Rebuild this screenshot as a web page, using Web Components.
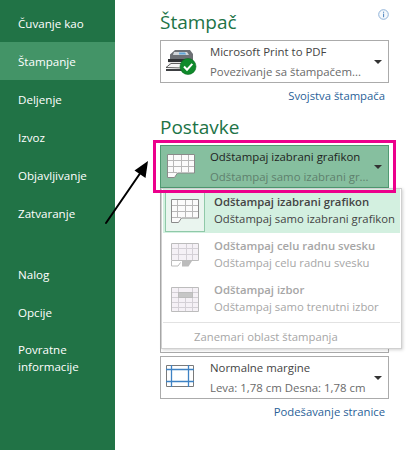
<!DOCTYPE html>
<html lang="sr">
<head>
<meta charset="utf-8">
<title>Štampanje</title>
<style>
  html, body { margin: 0; height: 100%; background: #fff; overflow: hidden; }
  body { font-family: "Open Sans", "Noto Sans", sans-serif; }
</style>
</head>
<body>
<print-page>
  <nav-item slot="nav">Čuvanje kao</nav-item>
  <nav-item slot="nav" selected>Štampanje</nav-item>
  <nav-item slot="nav">Deljenje</nav-item>
  <nav-item slot="nav">Izvoz</nav-item>
  <nav-item slot="nav">Objavljivanje</nav-item>
  <nav-item slot="nav">Zatvaranje</nav-item>
  <nav-item slot="nav" class="first-lower">Nalog</nav-item>
  <nav-item slot="nav">Opcije</nav-item>
  <nav-item slot="nav" class="tall">Povratne<br>informacije</nav-item>

  <section-title>Štampač</section-title>
  <combo-box>
    <printer-icon slot="icon"></printer-icon>
    Microsoft Print to PDF
    <span slot="sub">Povezivanje sa štampačem...</span>
  </combo-box>
  <link-row>Svojstva štampača</link-row>

  <section-title class="second">Postavke</section-title>
  <settings-stack>
    <combo-box active>
      <grid-icon slot="icon" kind="chart"></grid-icon>
      Odštampaj izabrani grafikon
      <span slot="sub">Odštampaj samo izabrani gr...</span>
    </combo-box>
    <option-menu slot="menu">
      <menu-option current>
        <grid-icon slot="icon" kind="chart"></grid-icon>
        Odštampaj izabrani grafikon
        <span slot="sub">Odštampaj samo izabrani grafikon</span>
      </menu-option>
      <menu-option disabled>
        <grid-icon slot="icon" kind="book"></grid-icon>
        Odštampaj celu radnu svesku
        <span slot="sub">Odštampaj celu radnu svesku</span>
      </menu-option>
      <menu-option disabled>
        <grid-icon slot="icon" kind="selection"></grid-icon>
        Odštampaj izbor
        <span slot="sub">Odštampaj samo trenutni izbor</span>
      </menu-option>
      <span slot="footer">Zanemari oblast štampanja</span>
    </option-menu>
  </settings-stack>
  <combo-box>
    <grid-icon slot="icon" kind="margins"></grid-icon>
    Normalne margine
    <span slot="sub">Leva: 1,78 cm Desna: 1,78 cm</span>
  </combo-box>
  <link-row>Podešavanje stranice</link-row>
</print-page>

<script>
class PrintPage extends HTMLElement {
  connectedCallback() {
    this.attachShadow({ mode: 'open' });
    this.shadowRoot.innerHTML = `
      <style>
        :host { display: flex; width: 408px; height: 450px; position: relative; overflow: hidden; background: #fff; }
        .side { width: 115px; flex: none; background: #217346; padding-top: 4px; box-sizing: border-box; display: flex; flex-direction: column; }
        .main { flex: none; width: 229px; margin-left: 45px; padding-top: 9px; display: flex; flex-direction: column; }
        .info { position: absolute; left: 378px; top: 9px; }
        .arrow { position: absolute; left: 100px; top: 155px; z-index: 5; }
      </style>
      <div class="side"><slot name="nav"></slot></div>
      <div class="main"><slot></slot></div>
      <svg class="info" width="11" height="11" viewBox="0 0 11 11">
        <circle cx="5.5" cy="5.5" r="4.8" fill="#f4f8fc" stroke="#8fb2d8"/>
        <rect x="5" y="4.6" width="1.1" height="3.6" fill="#5b8ec4"/>
        <rect x="5" y="2.7" width="1.1" height="1.1" fill="#5b8ec4"/>
      </svg>
      <svg class="arrow" width="54" height="74" viewBox="0 0 54 74">
        <path d="M6 68 L41 17" stroke="#000" stroke-width="2" stroke-linecap="round"/>
        <path d="M48 6 L45.5 23 L34.5 15.5 Z" fill="#000"/>
      </svg>
    `;
  }
}

class NavItem extends HTMLElement {
  connectedCallback() {
    this.attachShadow({ mode: 'open' });
    this.shadowRoot.innerHTML = `
      <style>
        :host { display: flex; align-items: center; min-height: 38px; padding-left: 18px; color: #fff; font-size: 11.6px; line-height: 17px; }
        :host([selected]) { background: #439467; }
        :host(.first-lower) { margin-top: 23px; }
        :host(.tall) { min-height: 54px; }
      </style>
      <div><slot></slot></div>
    `;
  }
}

class SectionTitle extends HTMLElement {
  connectedCallback() {
    this.attachShadow({ mode: 'open' });
    this.shadowRoot.innerHTML = `
      <style>
        :host { display: block; color: #217346; font-size: 19px; line-height: 26px; height: 31px; }
        :host(.second) { margin-top: 10px; }
      </style>
      <slot></slot>
    `;
  }
}

class ComboBox extends HTMLElement {
  connectedCallback() {
    this.attachShadow({ mode: 'open' });
    this.shadowRoot.innerHTML = `
      <style>
        :host { display: flex; align-items: center; height: 43px; box-sizing: border-box; border: 1px solid #ababab; background: #fff; color: #444; position: relative; font-size: 11.4px; }
        :host([active]) { background: #86bf9f; border-color: #4f9a72; color: #1e1e1e; }
        .icon { width: 49px; flex: none; display: flex; padding-left: 5px; box-sizing: border-box; }
        :host([active]) .icon { padding-left: 6px; }
        .text { flex: 1; min-width: 0; white-space: nowrap; line-height: 17px; }
        .sub { color: #6a6a6a; margin-top: 3px; }
        :host([active]) .sub { color: #5f7f6d; }
        .caret { width: 0; height: 0; border: 4px solid transparent; border-top: 4px solid #333; border-bottom: 0; margin-right: 6px; }
        .mark { display: none; position: absolute; left: -8px; right: -8px; top: -6px; bottom: -6px; border: 3px solid #ec008c; box-sizing: border-box; z-index: 4; pointer-events: none; }
        :host([active]) .mark { display: block; }
      </style>
      <div class="icon"><slot name="icon"></slot></div>
      <div class="text"><div><slot></slot></div><div class="sub"><slot name="sub"></slot></div></div>
      <div class="caret"></div>
      <div class="mark"></div>
    `;
  }
}

class LinkRow extends HTMLElement {
  connectedCallback() {
    this.attachShadow({ mode: 'open' });
    this.shadowRoot.innerHTML = `
      <style>
        :host { display: block; text-align: right; color: #2a5f98; font-size: 11.3px; line-height: 17px; padding: 4px 4px 0 0; }
      </style>
      <slot></slot>
    `;
  }
}

// the menu hangs over the combos it covers, only the bottom edge of those peeks out
class SettingsStack extends HTMLElement {
  connectedCallback() {
    this.attachShadow({ mode: 'open' });
    this.shadowRoot.innerHTML = `
      <style>
        :host { display: block; position: relative; height: 211px; z-index: 3; }
        .peek { position: absolute; left: 0; right: 0; top: 43px; height: 165px; box-sizing: border-box; border: 1px solid #ababab; border-top: 0; }
      </style>
      <div class="peek"></div>
      <slot></slot>
      <slot name="menu"></slot>
    `;
  }
}

class OptionMenu extends HTMLElement {
  connectedCallback() {
    this.attachShadow({ mode: 'open' });
    this.shadowRoot.innerHTML = `
      <style>
        :host { display: block; position: absolute; left: 1px; top: 43px; width: 241px; height: 161px; box-sizing: border-box; background: #fff; border: 1px solid #d0d0d0; box-shadow: 1px 1px 3px rgba(0,0,0,.18); padding: 0 1px; }
        .foot { border-top: 1px solid #e2e2e2; margin-top: 1px; height: 27px; line-height: 27px; padding-left: 31px; color: #a6a6a6; font-size: 11.3px; white-space: nowrap; }
      </style>
      <slot></slot>
      <div class="foot"><slot name="footer"></slot></div>
    `;
  }
}

class MenuOption extends HTMLElement {
  connectedCallback() {
    this.attachShadow({ mode: 'open' });
    this.shadowRoot.innerHTML = `
      <style>
        :host { display: flex; align-items: center; height: 44px; box-sizing: border-box; color: #444; font-size: 11.3px; padding: 1px 0; }
        :host([current]) { background: #d3f0e0; }
        :host([disabled]) { color: #a6a6a6; }
        .icon { flex: none; width: 40px; height: 42px; margin-left: 2px; margin-right: 9px; box-sizing: border-box; display: flex; align-items: center; justify-content: center; border: 1px solid transparent; }
        :host([current]) .icon { border-color: #8fc9a8; background: #eaf5ef; }
        .text { white-space: nowrap; line-height: 17px; min-width: 0; margin-top: -3px; }
        .title { font-weight: 600; }
        .sub { font-weight: 400; }
      </style>
      <div class="icon"><slot name="icon"></slot></div>
      <div class="text"><div class="title"><slot></slot></div><div class="sub"><slot name="sub"></slot></div></div>
    `;
  }
}

class GridIcon extends HTMLElement {
  connectedCallback() {
    const kind = this.getAttribute('kind');
    const art = {
      chart: `
        <path d="M.5.5h27v18.5h-17l-3 4.5h-7z" fill="#fbfbfb" stroke="#8a8a8a"/>
        <path d="M1 6.5h26M1 12.5h26M1 18.5h9M6.5 1v17.5M14.5 1v17.5M21.5 1v17.5" stroke="#b8b8b8"/>`,
      book: `
        <path d="M.5.5h27v17H.5z" fill="#f5f1f6" stroke="#bcbcbc"/>
        <path d="M1 5.5h26M1 11.5h26M7.5 1v16M15.5 1v16M21.5 1v16" stroke="#d4d0d6"/>
        <path d="M.5 18v5h6.5l2.5-3.5" fill="none" stroke="#bcbcbc"/>
        <path d="M11 18h10l-3.5 5.5h-6.5z" fill="#bcbcbc"/>`,
      selection: `
        <path d="M.5.5h27v24H.5z" fill="#f5f1f6" stroke="#bcbcbc"/>
        <path d="M1 5.5h26M1 10.5h26M1 15.5h26M1 20.5h26M7.5 1v23M14.5 10.5v13.5M21.5 1v23" stroke="#d4d0d6"/>
        <rect x="7.5" y="5.5" width="14" height="5" fill="#c6c6c6" stroke="#bcbcbc"/>`,
      margins: `
        <path d="M.5.5h27v21H.5z" fill="#fff" stroke="#7a7a7a"/>
        <path d="M0 4.5h28M0 16.5h28M5.5 0v22M22.5 0v22" stroke="#3e82c4" stroke-width="1.3"/>`
    }[kind];
    this.attachShadow({ mode: 'open' });
    this.shadowRoot.innerHTML = `
      <style>:host { display: block; width: 28px; height: 25px; } svg { display: block; }</style>
      <svg width="28" height="25" viewBox="0 0 28 25" fill="none">${art}</svg>
    `;
  }
}

class PrinterIcon extends HTMLElement {
  connectedCallback() {
    this.attachShadow({ mode: 'open' });
    this.shadowRoot.innerHTML = `
      <style>:host { display: block; width: 32px; height: 26px; margin-left: -1px; } svg { display: block; }</style>
      <svg width="32" height="26" viewBox="0 0 32 26">
        <path d="M5 5.5 L10 1 H25 L28 5 V14 H5 Z" fill="#6d7075"/>
        <path d="M9 3 H22 L24 6 H8 Z" fill="#d2d6da"/>
        <path d="M14 3.5 h6 l1.2 2 h-7z" fill="#5fa5d8"/>
        <path d="M3 10 H24 V13 H3 Z" fill="#2f3134"/>
        <path d="M3.5 13 H17 V19 H3.5 Z" fill="#e4e4e4"/>
        <path d="M1 18.5 L6 14.5 H17 V19 Z" fill="#f6f6f6" stroke="#3a3a3a" stroke-width=".8"/>
        <path d="M1 20 H18 V22 H1 Z" fill="#3c3e41"/>
        <circle cx="23" cy="17.5" r="8" fill="#0f8a2b"/>
        <circle cx="23" cy="17.5" r="8" fill="none" stroke="#0a6b20" stroke-width=".6"/>
        <path d="M19 17.5 L22 20.7 L27.3 14.8" fill="none" stroke="#fff" stroke-width="2"/>
      </svg>
    `;
  }
}

customElements.define('print-page', PrintPage);
customElements.define('nav-item', NavItem);
customElements.define('section-title', SectionTitle);
customElements.define('combo-box', ComboBox);
customElements.define('link-row', LinkRow);
customElements.define('settings-stack', SettingsStack);
customElements.define('option-menu', OptionMenu);
customElements.define('menu-option', MenuOption);
customElements.define('grid-icon', GridIcon);
customElements.define('printer-icon', PrinterIcon);
</script>
</body>
</html>
